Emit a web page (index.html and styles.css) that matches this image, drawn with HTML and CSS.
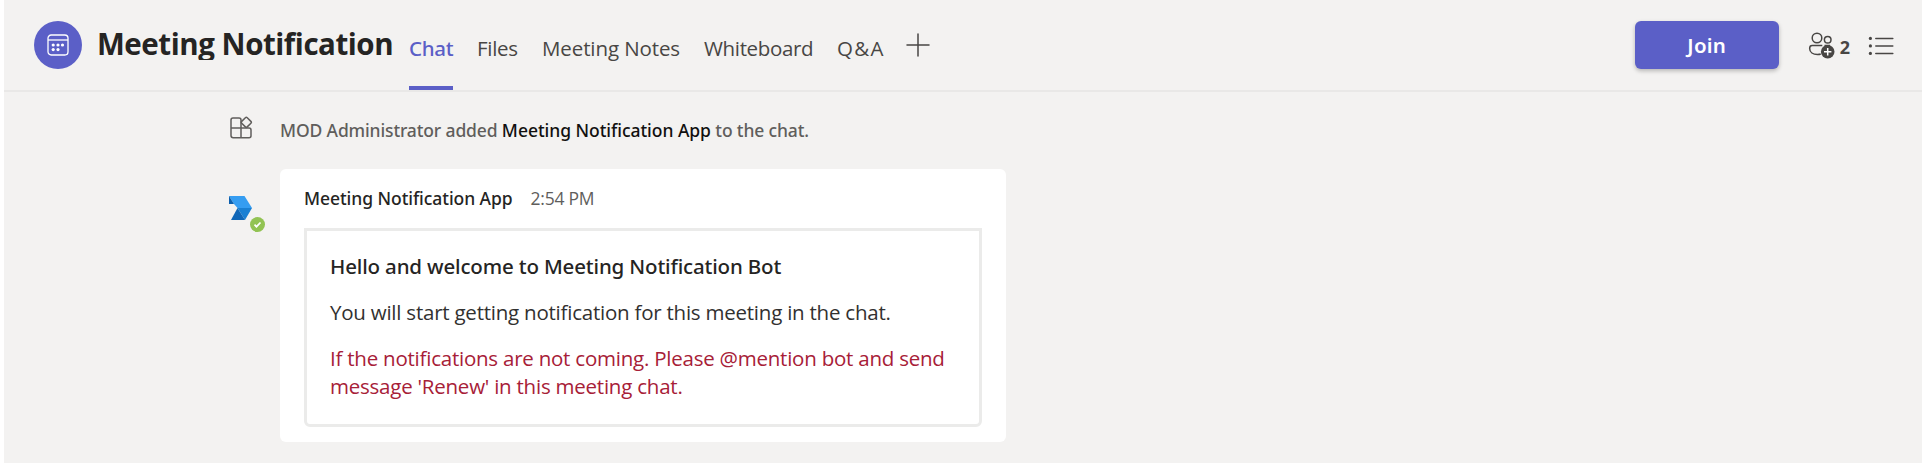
FILE: index.html
```html
<!DOCTYPE html>
<html lang="en">
<head>
<meta charset="utf-8">
<title>Meeting Notification</title>
<link rel="stylesheet" href="styles.css">
</head>
<body>
<div class="app">
  <header class="header">
    <div class="avatar">
      <svg width="22" height="22" viewBox="0 0 22 22" fill="none" stroke="#fff" stroke-width="1.3">
        <rect x="1" y="1" width="20" height="20" rx="3.2"/>
        <path d="M1 6h20"/>
        <g fill="#fff" stroke="none"><circle cx="6.2" cy="11" r="1.6"/><circle cx="11" cy="11" r="1.6"/><circle cx="15.5" cy="11" r="1.6"/><circle cx="6.2" cy="15.6" r="1.6"/><circle cx="11" cy="15.6" r="1.6"/></g>
      </svg>
    </div>
    <h1 class="title">Meeting Notification</h1>
    <nav class="tabs">
      <a class="tab tab-chat">Chat</a>
      <a class="tab tab-files">Files</a>
      <a class="tab tab-notes">Meeting Notes</a>
      <a class="tab tab-board">Whiteboard</a>
      <a class="tab tab-qa">Q&amp;A</a>
      <svg class="add" width="24" height="24" viewBox="0 0 24 24" stroke="#484644" stroke-width="1.5" stroke-linecap="round"><path d="M12 1v22M1 12h22"/></svg>
    </nav>
    <div class="actions">
      <button class="join">Join</button>
      <svg class="people" width="28" height="28" viewBox="0 0 28 28" fill="none" stroke="#484644" stroke-width="1.5">
        <circle cx="9" cy="6" r="4.8"/><circle cx="19.7" cy="7.7" r="3.3"/>
        <path d="M14.3 13.4H4.2Q1.7 13.4 1.7 16v.8c0 3.6 3.3 5.7 7.8 5.7 1.2 0 2.3-.1 3.2-.5M16.5 13.4H22"/>
        <circle cx="19.7" cy="19.7" r="6.8" fill="#484644" stroke="none"/>
        <path d="M19.7 16v7.4M16 19.7h7.4" stroke="#fff"/>
      </svg>
      <span class="count">2</span>
      <svg class="list" width="26" height="20" viewBox="0 0 26 20" stroke="#484644" stroke-width="1.5" stroke-linecap="round"><path d="M7.8 2.4h17M7.8 9.9h17M7.8 17.4h17"/><g fill="#484644" stroke="none"><circle cx="2.4" cy="2.4" r="1.6"/><circle cx="2.4" cy="9.9" r="1.6"/><circle cx="2.4" cy="17.4" r="1.6"/></g></svg>
    </div>
  </header>
  <main class="feed">
    <div class="row system">
      <svg class="app-icon" width="25" height="24" viewBox="0 0 25 24" fill="none" stroke="#605e5c" stroke-width="1.5" stroke-linejoin="round">
        <path d="M12 12V4Q12 2 10 2H4Q2 2 2 4v15.5Q2 21.700 4.200 21.700H20Q22 21.700 22 19.700V14Q22 12 20 12H2M12 12v9.700"/>
        <rect x="13.400" y="2.400" width="7.800" height="7.800" rx="1.300" transform="rotate(45 17.300 6.300)"/>
      </svg>
      <p class="notice">MOD Administrator added <span class="strong">Meeting Notification App</span> to the chat.</p>
    </div>
    <div class="row">
      <div class="bot">
        <svg width="24" height="24" viewBox="0 0 24 24"><path d="M0 0h15.500L23 12H8.500L5 8z" fill="#359df1"/><path d="M0 0v8h5z" fill="#0b5fae"/><path d="M8.500 12H23l-7 12z" fill="#1a80d3"/><path d="M8.500 12L2 24h14z" fill="#0f66b7"/></svg>
        <svg class="presence" width="15" height="15" viewBox="0 0 15 15"><circle cx="7.500" cy="7.500" r="7.500" fill="#92c353"/><path d="M4.500 7.700l2 2 4-4.200" fill="none" stroke="#fff" stroke-width="1.700"/></svg>
      </div>
      <article class="card">
        <div class="meta"><span class="name">Meeting Notification App</span><span class="time">2:54 PM</span></div>
        <section class="box">
          <h2 class="hello">Hello and welcome to Meeting Notification Bot</h2>
          <p class="body">You will start getting notification for this meeting in the chat.</p>
          <p class="warn">If the notifications are not coming. Please @mention bot and send message 'Renew' in this meeting chat.</p>
        </section>
      </article>
    </div>
  </main>
</div>
</body>
</html>
```
FILE: styles.css
```css
* { box-sizing: border-box; }
body { margin: 0; background: #fff; font-family: "Open Sans", "Noto Sans", sans-serif; }
h1, h2, p { margin: 0; font-weight: 400; }
svg { display: block; flex: none; }
.app { margin-left: 4px; height: 463px; background: #f3f2f1; overflow: hidden; }
.header { display: flex; height: 92px; border-bottom: 2px solid #e9e8e7; padding-left: 30px; }
.avatar { display: flex; align-items: center; justify-content: center; width: 48px; height: 48px; margin-top: 21px; border-radius: 50%; background: #5b5fc7; }
.title { width: 312px; height: 36px; margin: 24px 0 0 15px; overflow: hidden; font-size: 29.5px; line-height: 40px; font-weight: 700; letter-spacing: -0.45px; white-space: nowrap; color: #252423; }
.tabs { display: flex; height: 90px; }
.tab { padding-top: 34px; font-size: 20.5px; line-height: 28px; white-space: nowrap; color: #484644; }
.tab-chat { width: 44px; margin-right: 24px; border-bottom: 4px solid #5b5fc7; color: #5b5fc7; font-family: "Noto Sans", sans-serif; font-weight: 500; letter-spacing: -0.3px; }
.tab-files { width: 65px; letter-spacing: -0.3px; }
.tab-notes { width: 162px; letter-spacing: -0.1px; }
.tab-board { width: 133px; letter-spacing: -0.35px; }
.tab-qa { width: 69px; letter-spacing: 1.3px; }
.add { margin-top: 33px; }
.actions { display: flex; margin-left: auto; padding-right: 28px; }
.join { width: 144px; height: 48px; margin-top: 21px; padding: 0; border: 0; border-radius: 6px; background: #5b5fc7; color: #fff; font: 600 20.5px "Noto Sans", sans-serif; letter-spacing: 0.2px; box-shadow: 0 2px 4px rgba(0, 0, 0, .25); }
.people { margin: 32px 0 0 29px; }
.count { margin: 35px 0 0 4px; font-size: 18px; line-height: 24px; font-weight: 700; color: #484644; }
.list { margin: 36px 0 0 18px; }
.feed { padding: 24px 0 0 225px; }
.row { display: flex; }
.system { height: 53px; }
.notice { margin: 2px 0 0 26px; font-family: "Noto Sans", sans-serif; font-size: 17.5px; line-height: 24px; font-weight: 500; letter-spacing: -0.14px; color: #605e5c; }
.strong { color: #11100f; letter-spacing: -0.04px; }
.bot { position: relative; width: 51px; padding-top: 27px; }
.presence { position: absolute; left: 21px; top: 48px; }
.card { width: 726px; height: 273px; padding: 17px 24px 15px; border-radius: 6px; background: #fff; }
.meta { display: flex; gap: 18px; height: 42px; font-size: 17.5px; line-height: 24px; }
.name { font-family: "Noto Sans", sans-serif; font-weight: 500; letter-spacing: -0.06px; color: #252423; }
.time { letter-spacing: -0.25px; color: #605e5c; }
.box { width: 678px; height: 199px; padding: 21px 24px 21px 23px; border: 3px solid #ebebea; border-radius: 0 0 6px 6px; font-size: 20.5px; line-height: 28px; color: #323130; }
.hello { font-family: "Noto Sans", sans-serif; font-size: 20.5px; font-weight: 500; letter-spacing: -0.16px; color: #252423; }
.body, .warn { margin-top: 18px; letter-spacing: -0.23px; }
.warn { color: #a72037; }
```
